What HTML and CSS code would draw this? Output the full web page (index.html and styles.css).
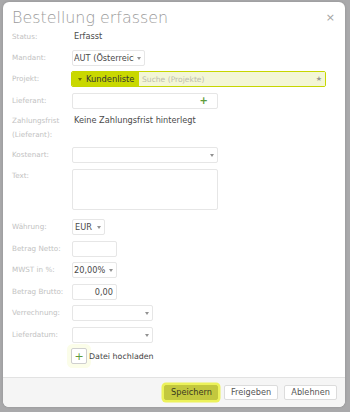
FILE: index.html
```html
<!DOCTYPE html>
<html lang="de">
<head>
<meta charset="utf-8">
<title>Bestellung erfassen</title>
<link rel="stylesheet" href="styles.css">
</head>
<body>
<div class="modal">
  <div class="head">
    <h1 class="title">Bestellung erfassen</h1>
    <span class="close">×</span>
  </div>
  <div class="form">
    <div class="row row-status">
      <span class="lbl">Status:</span>
      <span class="val">Erfasst</span>
    </div>
    <div class="row">
      <span class="lbl">Mandant:</span>
      <div class="box sel w-mandant"><span class="sel-text">AUT (Österreich)</span><span class="caret"></span></div>
    </div>
    <div class="row">
      <span class="lbl">Projekt:</span>
      <div class="projekt">
        <div class="proj-tag"><span class="caret dark"></span><span>Kundenliste</span></div>
        <div class="proj-search"><span class="ph">Suche (Projekte)</span><span class="star">★</span></div>
      </div>
    </div>
    <div class="row">
      <span class="lbl">Lieferant:</span>
      <div class="box w-wide plusbox"><span class="plus">+</span></div>
    </div>
    <div class="row row-top row-zf">
      <span class="lbl">Zahlungsfrist<br>(Lieferant):</span>
      <span class="val">Keine Zahlungsfrist hinterlegt</span>
    </div>
    <div class="row">
      <span class="lbl">Kostenart:</span>
      <div class="box sel w-wide"><span class="sel-text"></span><span class="caret"></span></div>
    </div>
    <div class="row row-top row-text">
      <span class="lbl">Text:</span>
      <div class="box w-wide area"></div>
    </div>
    <div class="row row-cur">
      <span class="lbl">Währung:</span>
      <div class="box sel w-eur"><span class="sel-text">EUR</span><span class="caret"></span></div>
    </div>
    <div class="row">
      <span class="lbl">Betrag Netto:</span>
      <div class="box w-num"></div>
    </div>
    <div class="row">
      <span class="lbl">MWST in %:</span>
      <div class="box sel w-mwst"><span class="sel-text">20,00%</span><span class="caret"></span></div>
    </div>
    <div class="row">
      <span class="lbl">Betrag Brutto:</span>
      <div class="box w-num num">0,00</div>
    </div>
    <div class="row">
      <span class="lbl">Verrechnung:</span>
      <div class="box sel w-mid"><span class="sel-text"></span><span class="caret"></span></div>
    </div>
    <div class="row">
      <span class="lbl">Lieferdatum:</span>
      <div class="box sel w-mid"><span class="sel-text"></span><span class="caret"></span></div>
    </div>
    <div class="row">
      <span class="lbl"></span>
      <div class="upload"><span class="up-btn">+</span><span class="up-text">Datei hochladen</span></div>
    </div>
  </div>
  <div class="foot">
    <button class="btn btn-primary">Speichern</button>
    <button class="btn">Freigeben</button>
    <button class="btn">Ablehnen</button>
  </div>
</div>
</body>
</html>
```
FILE: styles.css
```css
html, body {
  margin: 0;
  padding: 0;
}
body {
  background: #a9a9ab;
  width: 350px;
  height: 412px;
  overflow: hidden;
  font-family: "DejaVu Sans", "Liberation Sans", sans-serif;
}
.modal {
  margin: 2px 0 0 3px;
  width: 342px;
  height: 405px;
  background: #fff;
  border-radius: 6px;
  display: flex;
  flex-direction: column;
  overflow: hidden;
  box-shadow: 0 0 3px rgba(0,0,0,0.15);
}
.head {
  display: flex;
  align-items: center;
  justify-content: space-between;
  padding: 6px 10px 0 9px;
}
.title {
  margin: 0;
  font-family: "DejaVu Sans ExtraLight", "DejaVu Sans", sans-serif;
  font-weight: 200;
  font-size: 15.9px;
  line-height: 20px;
  color: #9b9b9b;
}
.close {
  font-size: 11px;
  color: #a3a3a3;
  line-height: 12px;
}
.form {
  flex: 1;
  display: flex;
  flex-direction: column;
  gap: 5.5px;
  padding: 1px 0 0 9px;
}
.row {
  display: flex;
  align-items: center;
  height: 16px;
}
.row-status { height: 15px; }
.row-top { align-items: flex-start; }
.row-zf { height: 27.5px; }
.row-text { height: 41px; }
.row-cur { margin-top: 4px; }
.lbl {
  width: 60px;
  flex: none;
  font-size: 7.2px;
  line-height: 13.5px;
  color: #c2c2c2;
}
.val {
  font-size: 8.2px;
  line-height: 13.5px;
  color: #4a4a4a;
  padding-left: 2px;
}
.box {
  box-sizing: border-box;
  height: 16px;
  border: 1px solid #e6e6e6;
  border-radius: 2px;
  background: #fff;
  font-size: 8.2px;
  color: #4a4a4a;
}
.sel {
  display: flex;
  align-items: center;
  padding-left: 1px;
}
.sel-text {
  flex: 1;
  overflow: hidden;
  white-space: nowrap;
}
.caret {
  flex: none;
  width: 0;
  height: 0;
  border-left: 2.5px solid transparent;
  border-right: 2.5px solid transparent;
  border-top: 3px solid #929292;
  margin: 1px 3px 0 3px;
}
.caret.dark { border-top-color: #6b7000; margin: 1px 4px 0 6px; }
.w-mandant { width: 73px; }
.w-wide { width: 146px; }
.w-eur { width: 33px; padding-left: 2px; }
.w-num { width: 45px; }
.w-mwst { width: 45px; }
.w-mid { width: 81px; }
.num {
  text-align: right;
  padding-right: 3px;
  line-height: 14px;
}
.area { height: 41px; }
.plusbox {
  display: flex;
  align-items: center;
  justify-content: flex-end;
  padding-right: 9px;
}
.plus {
  color: #5e9c3b;
  font-size: 10px;
  font-weight: bold;
  line-height: 10px;
}
.projekt {
  box-sizing: border-box;
  width: 255px;
  height: 16px;
  margin-left: -1px;
  border: 1px solid #c6d600;
  border-radius: 2px;
  display: flex;
  overflow: hidden;
}
.proj-tag {
  width: 67px;
  flex: none;
  background: #c9d800;
  display: flex;
  align-items: center;
  font-size: 8.3px;
  color: #333;
}
.proj-search {
  flex: 1;
  background: #f3f6d6;
  display: flex;
  align-items: center;
  justify-content: space-between;
  padding: 0 3px 0 3px;
}
.ph {
  font-size: 7.6px;
  color: #bdbdac;
}
.star {
  font-size: 7px;
  color: #9a9a90;
}
.upload {
  display: flex;
  align-items: center;
  margin-left: -1px;
  height: 16px;
}
.up-btn {
  box-sizing: border-box;
  width: 16px;
  height: 16px;
  border: 1px solid #cfcfcf;
  border-radius: 2px;
  display: flex;
  align-items: center;
  justify-content: center;
  color: #5e9c3b;
  font-size: 11px;
  line-height: 11px;
  background: #fff;
  box-shadow: 0 0 0 4px #fbfde9;
}
.up-text {
  margin-left: 2px;
  font-size: 7.9px;
  color: #444;
}
.foot {
  height: 29px;
  border-top: 1px solid #e2e2e2;
  background: #f5f5f5;
  display: flex;
  align-items: center;
  justify-content: flex-end;
  gap: 6px;
  padding: 0 8px 0 0;
}
.btn {
  box-sizing: border-box;
  height: 15px;
  padding: 0 6px;
  border: 1px solid #dcdcdc;
  border-radius: 2px;
  background: #fff;
  font-family: "DejaVu Sans", sans-serif;
  font-size: 8.2px;
  color: #555;
  line-height: 13px;
  margin: 0;
}
.btn-primary {
  width: 54px;
  background: #c3c83e;
  border-color: #c3c83e;
  color: #3a3a20;
  box-shadow: 0 0 0 2.5px #ecf25a;
}
```
